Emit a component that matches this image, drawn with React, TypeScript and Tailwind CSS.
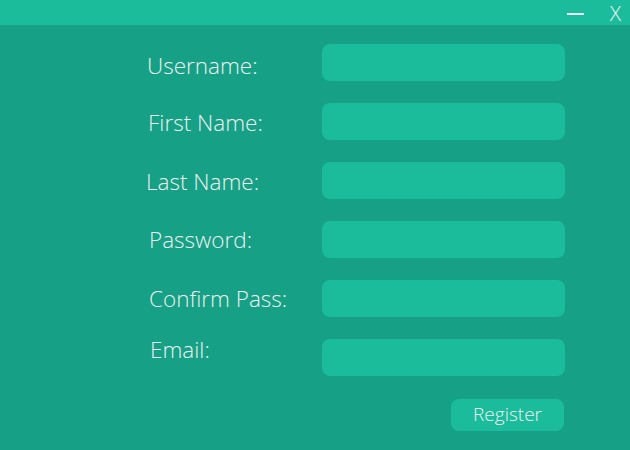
import React from 'react';

const fields = [
  { label: 'Username:', pad: 'pl-[1px]', shift: 'mt-[7px]' },
  { label: 'First Name:', pad: 'pl-[2px]', shift: 'mt-[3px]' },
  { label: 'Last Name:', pad: 'pl-0', shift: 'mt-[3px]' },
  { label: 'Password:', pad: 'pl-[3px]', shift: 'mt-[2px]' },
  { label: 'Confirm Pass:', pad: 'pl-[3px]', shift: 'mt-[2px]' },
  { label: 'Email:', pad: 'pl-[4px]', shift: 'mt-[-15px]' },
];

const App = () => {
  return (
    <div className="w-[630px] h-[450px] flex flex-col bg-[#16a085] font-['Open_Sans',sans-serif] font-light text-[#ecf0f1]">
      {/* Title bar */}
      <div className="h-[25px] bg-[#1abc9c] flex items-center justify-end">
        <button className="w-[17px] h-[2px] bg-[#ecf0f1] mr-[26px] mt-[3px]" aria-label="minimize" />
        <button className="text-[21px] leading-[22px] mr-[9px] font-light">X</button>
      </div>

      {/* Form */}
      <div className="flex flex-col gap-[22px] pt-[19px] pl-[146px]">
        {fields.map((f) => (
          <div key={f.label} className="flex items-center h-[37px]">
            <label className={`w-[176px] text-[22.5px] leading-none ${f.pad} ${f.shift}`}>{f.label}</label>
            <input className="w-[243px] h-[37px] rounded-lg bg-[#1abc9c] outline-none px-3 text-white" />
          </div>
        ))}
      </div>

      <div className="flex justify-end pr-[66px] pt-[23px]">
        <button className="w-[113px] h-[32px] rounded-lg bg-[#1abc9c] text-[19px] leading-none pb-[2px] text-[#ecf0f1] font-light">
          Register
        </button>
      </div>
    </div>
  );
};

export default App;
